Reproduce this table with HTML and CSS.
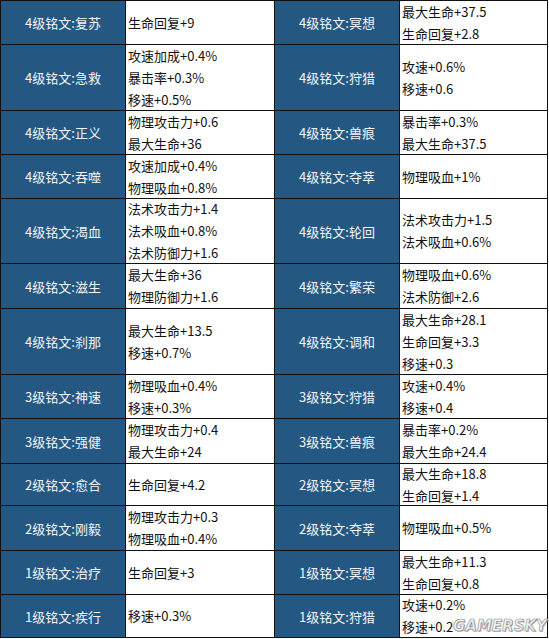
FILE: index.html
```html
<!DOCTYPE html>
<html lang="zh-CN">
<head>
<meta charset="utf-8">
<title>铭文表</title>
<link rel="stylesheet" href="styles.css">
</head>
<body>
<div class="page">
  <div class="sheet">
    <div class="h">4级铭文:复苏</div>
    <div class="v"><span>生命回复+9</span></div>
    <div class="h">4级铭文:冥想</div>
    <div class="v"><span>最大生命+37.5</span><span>生命回复+2.8</span></div>

    <div class="h">4级铭文:急救</div>
    <div class="v"><span>攻速加成+0.4%</span><span>暴击率+0.3%</span><span>移速+0.5%</span></div>
    <div class="h">4级铭文:狩猎</div>
    <div class="v"><span>攻速+0.6%</span><span>移速+0.6</span></div>

    <div class="h">4级铭文:正义</div>
    <div class="v"><span>物理攻击力+0.6</span><span>最大生命+36</span></div>
    <div class="h">4级铭文:兽痕</div>
    <div class="v"><span>暴击率+0.3%</span><span>最大生命+37.5</span></div>

    <div class="h">4级铭文:吞噬</div>
    <div class="v"><span>攻速加成+0.4%</span><span>物理吸血+0.8%</span></div>
    <div class="h">4级铭文:夺萃</div>
    <div class="v"><span>物理吸血+1%</span></div>

    <div class="h">4级铭文:渴血</div>
    <div class="v"><span>法术攻击力+1.4</span><span>法术吸血+0.8%</span><span>法术防御力+1.6</span></div>
    <div class="h">4级铭文:轮回</div>
    <div class="v"><span>法术攻击力+1.5</span><span>法术吸血+0.6%</span></div>

    <div class="h">4级铭文:滋生</div>
    <div class="v"><span>最大生命+36</span><span>物理防御力+1.6</span></div>
    <div class="h">4级铭文:繁荣</div>
    <div class="v"><span>物理吸血+0.6%</span><span>法术防御+2.6</span></div>

    <div class="h">4级铭文:刹那</div>
    <div class="v"><span>最大生命+13.5</span><span>移速+0.7%</span></div>
    <div class="h">4级铭文:调和</div>
    <div class="v"><span>最大生命+28.1</span><span>生命回复+3.3</span><span>移速+0.3</span></div>

    <div class="h">3级铭文:神速</div>
    <div class="v"><span>物理吸血+0.4%</span><span>移速+0.3%</span></div>
    <div class="h">3级铭文:狩猎</div>
    <div class="v"><span>攻速+0.4%</span><span>移速+0.4</span></div>

    <div class="h">3级铭文:强健</div>
    <div class="v"><span>物理攻击力+0.4</span><span>最大生命+24</span></div>
    <div class="h">3级铭文:兽痕</div>
    <div class="v"><span>暴击率+0.2%</span><span>最大生命+24.4</span></div>

    <div class="h">2级铭文:愈合</div>
    <div class="v"><span>生命回复+4.2</span></div>
    <div class="h">2级铭文:冥想</div>
    <div class="v"><span>最大生命+18.8</span><span>生命回复+1.4</span></div>

    <div class="h">2级铭文:刚毅</div>
    <div class="v"><span>物理攻击力+0.3</span><span>物理吸血+0.4%</span></div>
    <div class="h">2级铭文:夺萃</div>
    <div class="v"><span>物理吸血+0.5%</span></div>

    <div class="h">1级铭文:治疗</div>
    <div class="v"><span>生命回复+3</span></div>
    <div class="h">1级铭文:冥想</div>
    <div class="v"><span>最大生命+11.3</span><span>生命回复+0.8</span></div>

    <div class="h">1级铭文:疾行</div>
    <div class="v"><span>移速+0.3%</span></div>
    <div class="h">1级铭文:狩猎</div>
    <div class="v"><span>攻速+0.2%</span><span>移速+0.2</span></div>
  </div>
  <div class="watermark">GAMERSKY</div>
</div>
</body>
</html>
```

FILE: styles.css
```css
html, body {
  margin: 0;
  padding: 0;
  background: #ffffff;
}

.page {
  position: relative;
  width: 549px;
  height: 639px;
}

.sheet {
  display: grid;
  grid-template-columns: 124px 148px 124px 147px;
  grid-template-rows: 43px 65px 43px 43px 64px 44px 65px 43px 44px 41px 44px 43px 42px;
  gap: 1px;
  padding: 1px;
  background: #111111;
  width: max-content;
  font-family: "Noto Sans CJK SC", "Noto Sans", sans-serif;
  font-size: 13px;
}

.h {
  background: #255783;
  color: #f2f5f9;
  display: flex;
  align-items: center;
  justify-content: center;
}

.v {
  background: #ffffff;
  color: #111111;
  display: flex;
  flex-direction: column;
  justify-content: center;
  padding-left: 2px;
  line-height: 22px;
  white-space: nowrap;
  overflow: hidden;
}

.watermark {
  position: absolute;
  left: 453px;
  top: 617px;
  font-family: "DejaVu Sans", sans-serif;
  font-weight: bold;
  font-style: italic;
  font-size: 15px;
  letter-spacing: 0px;
  color: rgba(245, 245, 245, 0.92);
  -webkit-text-stroke: 0.6px #8a8a8a;
  text-shadow: 1px 1px 0 rgba(120, 120, 120, 0.5);
}
```
